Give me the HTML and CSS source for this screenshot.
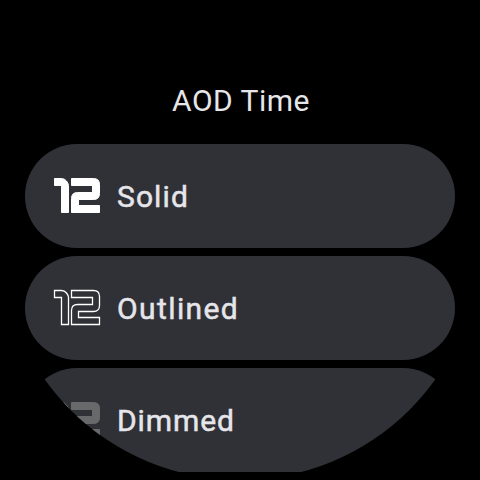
FILE: index.html
```html
<!DOCTYPE html>
<html lang="en">
<head>
<meta charset="utf-8">
<title>AOD Time</title>
<link rel="stylesheet" href="styles.css">
</head>
<body>
<svg width="0" height="0" class="defs" aria-hidden="true">
  <symbol id="twelve" viewBox="0 0 48 38">
    <path d="M1.5 1.5H8.500Q11.500 1.500 13.500 4T15.500 8.500V35.500H8.500V8.500H1.500ZM18.500 1.500H40.500Q46.500 1.500 46.500 7.500V16.500Q46.500 22.500 40.500 22.500H25.500V28.500H46.500V35.500H18.500V21.500Q18.500 15.500 24.500 15.500H39.500V8.500H18.500Z"/>
  </symbol>
</svg>
<main class="watch">
  <h1 class="title">AOD Time</h1>
  <div class="list">
    <button class="chip"><svg class="icon solid"><use href="#twelve"/></svg><span class="label">Solid</span></button>
    <button class="chip"><svg class="icon outlined"><use href="#twelve"/></svg><span class="label wide">Outlined</span></button>
    <button class="chip"><svg class="icon dimmed"><use href="#twelve"/></svg><span class="label tight">Dimmed</span></button>
  </div>
</main>
</body>
</html>
```
FILE: styles.css
```css
* { box-sizing: border-box; }
body { margin: 0; background: #000; overflow: hidden; }
.defs { display: block; }
.watch {
  width: 480px;
  height: 480px;
  padding: 83px 25px 0;
  overflow: hidden;
  background: #000;
  clip-path: circle(240px at 240px 240px);
  font-family: Roboto, sans-serif;
}
.title {
  margin: 0 0 25px;
  padding-left: 2px;
  font-size: 30px;
  line-height: 36px;
  font-weight: 400;
  letter-spacing: 0.5px;
  text-align: center;
  color: #e6e6e8;
}
.list { display: flex; flex-direction: column; gap: 8px; }
.chip {
  display: flex;
  align-items: center;
  gap: 16px;
  width: 430px;
  height: 104px;
  padding: 0 28px;
  border: 0;
  border-radius: 52px;
  background: #303136;
  color: #e6e6ea;
  font: 400 30px/36px Roboto, sans-serif;
  letter-spacing: 1.1px;
}
.label { padding-top: 2px; -webkit-text-stroke: 0.5px #e6e6ea; }
.wide { letter-spacing: 1.4px; }
.tight { letter-spacing: 0.9px; }
.icon { width: 48px; height: 38px; flex: none; stroke-width: 1; }
.solid { fill: #fff; stroke: #fff; }
.outlined { fill: none; stroke: #fff; stroke-width: 1.3; }
.dimmed { fill: #68696b; stroke: #68696b; }
```
